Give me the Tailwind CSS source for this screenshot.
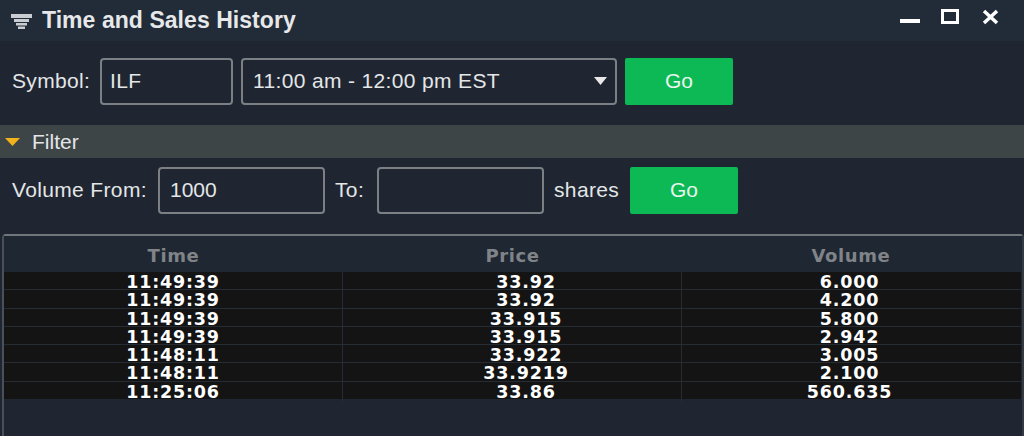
<!DOCTYPE html>
<html lang="en">
<head>
  <meta charset="UTF-8">
  <title>Time and Sales History</title>
  <script src="https://cdn.jsdelivr.net/npm/@tailwindcss/browser@4"></script>
</head>
<body class="bg-[#1f2631] font-['Liberation_Sans',sans-serif] text-[#e4e6e8] text-[21px] tracking-[0.35px] overflow-hidden">
  <div class="w-[1024px] h-[436px] flex flex-col">
    <!-- title bar -->
    <div class="h-[41px] bg-[#222b38] flex items-center pl-[11px] pr-[25px]">
      <svg class="w-[21px] h-[16px] mr-[10px]" viewBox="0 0 21 16" fill="#c9ccd0">
        <rect x="0" y="1" width="21" height="4"/>
        <rect x="3" y="6" width="15" height="3"/>
        <rect x="5" y="10" width="11" height="2.5"/>
        <rect x="7" y="13.500" width="7" height="2.5"/>
      </svg>
      <span class="text-[23px] tracking-[0.05px] font-bold text-[#e6e8ea]">Time and Sales History</span>
      <div class="ml-auto flex items-start pb-[8px]">
        <svg class="w-[20px] h-[15px] mr-[21px]" viewBox="0 0 20 15" fill="#fff"><rect x="0" y="10" width="20" height="4"/></svg>
        <svg class="w-[18px] h-[15px] mr-[23px]" viewBox="0 0 18 15"><rect x="1.500" y="1.500" width="15" height="12" fill="none" stroke="#fff" stroke-width="3"/></svg>
        <svg class="w-[17px] h-[16px]" viewBox="0 0 17 16"><path d="M2 2l13 12M15 2L2 14" stroke="#fff" stroke-width="3.500" fill="none"/></svg>
      </div>
    </div>
    <!-- symbol row -->
    <div class="h-[84px] flex items-center pl-[12px] pb-[4px]">
      <span class="w-[88px]">Symbol:</span>
      <div class="w-[133px] h-[47px] rounded-[4px] border-2 border-[#7c8085] flex items-center pl-[8px]">ILF</div>
      <div class="ml-[8px] w-[376px] h-[47px] rounded-[4px] border-2 border-[#7c8085] flex items-center pl-[10px]">
        <span>11:00 am - 12:00 pm EST</span>
        <svg class="ml-auto mr-[8px] w-[13px] h-[8px]" viewBox="0 0 13 8" fill="#e8e8e8"><path d="M0 0h13L6.500 8z"/></svg>
      </div>
      <button class="ml-[8px] w-[108px] h-[47px] rounded-[2px] bg-[#0db954] text-[#e8f6ee] tracking-normal">Go</button>
    </div>
    <!-- filter header -->
    <div class="h-[33px] bg-[#3e4547] flex items-center pl-[5px]">
      <svg class="w-[15px] h-[8px] mr-[12px]" viewBox="0 0 15 8"><path d="M0 0h15L7.500 8z" fill="#f2b21c"/></svg>
      <span class="tracking-normal">Filter</span>
    </div>
    <!-- volume row -->
    <div class="h-[76px] flex items-start pl-[12px] pt-[9px]">
      <span class="w-[146px] leading-[45px]">Volume From:</span>
      <div class="w-[167px] h-[47px] rounded-[4px] border-2 border-[#7c8085] pl-[10px] leading-[41px] tracking-normal">1000</div>
      <span class="ml-[10px] w-[42px] leading-[45px]">To:</span>
      <div class="w-[167px] h-[47px] rounded-[4px] border-2 border-[#7c8085]"></div>
      <span class="ml-[10px] w-[76px] leading-[45px]">shares</span>
      <button class="w-[108px] h-[47px] rounded-[2px] bg-[#0db954] text-[#e8f6ee] tracking-normal pb-[2px]">Go</button>
    </div>
    <!-- table -->
    <div class="flex-1 ml-[2px] border-t-2 border-l-2 border-r-2 border-t-[#71767b] border-l-[#4a5058] border-r-[#333a44] rounded-tl-[4px] rounded-tr-[4px] font-['DejaVu_Sans',sans-serif] font-bold">
      <div class="grid grid-cols-[339px_339px_1fr] h-[36px] items-center text-center text-[#808488] text-[18px] tracking-[0.6px] pt-[3px] bg-[#1f2733]">
        <div>Time</div><div>Price</div><div class="pr-[2px]">Volume</div>
      </div>
      <div class="text-[17.500px] tracking-[0.8px] leading-[20px] text-white text-center bg-[#141414] mr-[1px] h-[127px]">
        <div class="grid grid-cols-[339px_339px_1fr] h-[18.300px] border-b border-[#262c34]"><div class="border-r border-[#262c34]">11:49:39</div><div class="border-r border-[#262c34] pl-[28px]">33.92</div><div class="pr-[4px]">6.000</div></div>
        <div class="grid grid-cols-[339px_339px_1fr] h-[18.300px] border-b border-[#262c34]"><div class="border-r border-[#262c34]">11:49:39</div><div class="border-r border-[#262c34] pl-[28px]">33.92</div><div class="pr-[4px]">4.200</div></div>
        <div class="grid grid-cols-[339px_339px_1fr] h-[18.300px] border-b border-[#262c34]"><div class="border-r border-[#262c34]">11:49:39</div><div class="border-r border-[#262c34] pl-[28px]">33.915</div><div class="pr-[4px]">5.800</div></div>
        <div class="grid grid-cols-[339px_339px_1fr] h-[18.300px] border-b border-[#262c34]"><div class="border-r border-[#262c34]">11:49:39</div><div class="border-r border-[#262c34] pl-[28px]">33.915</div><div class="pr-[4px]">2.942</div></div>
        <div class="grid grid-cols-[339px_339px_1fr] h-[18.300px] border-b border-[#262c34]"><div class="border-r border-[#262c34]">11:48:11</div><div class="border-r border-[#262c34] pl-[28px]">33.922</div><div class="pr-[4px]">3.005</div></div>
        <div class="grid grid-cols-[339px_339px_1fr] h-[18.300px] border-b border-[#262c34]"><div class="border-r border-[#262c34]">11:48:11</div><div class="border-r border-[#262c34] pl-[28px]">33.9219</div><div class="pr-[4px]">2.100</div></div>
        <div class="grid grid-cols-[339px_339px_1fr] h-[18.300px]"><div class="border-r border-[#262c34]">11:25:06</div><div class="border-r border-[#262c34] pl-[28px]">33.86</div><div class="pr-[4px]">560.635</div></div>
      </div>
    </div>
  </div>
</body>
</html>
